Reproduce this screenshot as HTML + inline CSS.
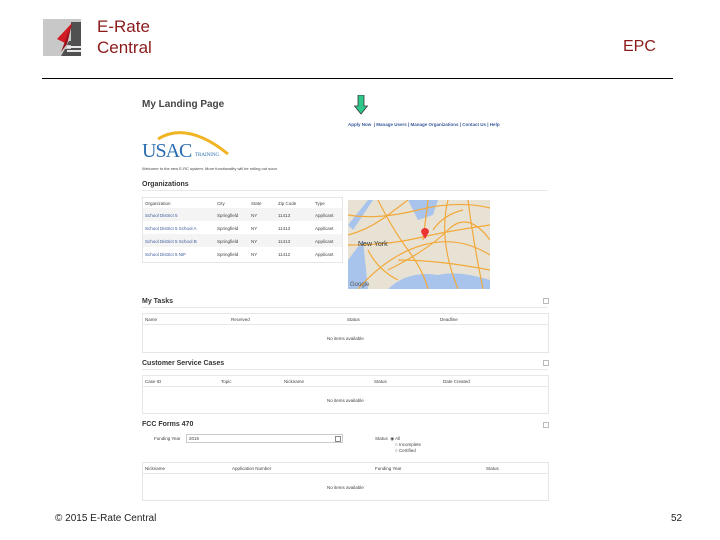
<!DOCTYPE html>
<html><head><meta charset="utf-8"><style>
*{margin:0;padding:0;box-sizing:border-box}
body{width:720px;height:540px;background:#fff;position:relative;overflow:hidden;font-family:"Liberation Sans",sans-serif}
.a{position:absolute;white-space:nowrap}
.t{font-size:4.5px;color:#444}
.h{font-size:7px;font-weight:bold;color:#333}
.box{position:absolute;border:1px solid #e6e6e6}
.ln{position:absolute;height:1px;background:#e8e8e8}
.lk{color:#3a5a9a}
</style></head><body>
<svg class="a" style="left:43px;top:19px" width="38" height="38" viewBox="0 0 38 38">
<rect x="0" y="0" width="38" height="37" fill="#c8c8c8"/>
<polygon points="28,3 38,3 38,37 18,37 22,30 28,30 28,26 24,26 26,22 28,22" fill="#505050"/>
<polygon points="29,4 14,20 24,25" fill="#d01c24"/>
<polygon points="29,4 24,25 18,33" fill="#9a1018"/>
<rect x="24" y="27" width="14" height="2" fill="#e8e8e8"/><rect x="24" y="31" width="14" height="2" fill="#e8e8e8"/>
</svg>
<div class="a" style="left:97px;top:16px;font-size:17px;color:#8b1a1a;line-height:21px">E-Rate<br>Central</div>
<div class="a" style="left:623px;top:38px;font-size:16px;color:#8b1a1a">EPC</div>
<div class="a" style="left:42px;top:78px;width:631px;height:1px;background:#000"></div>

<div class="a" style="left:142px;top:99px;font-size:10px;font-weight:bold;color:#444">My Landing Page</div>
<svg class="a" style="left:354px;top:95px" width="14" height="20" viewBox="0 0 14 20"><polygon points="4,0 10,0 10,11 13.5,11 7,19 0.5,11 4,11" fill="#2ec98a" stroke="#333" stroke-width="0.8"/></svg>
<div class="a t lk" style="left:348px;top:122px;font-weight:bold">Apply Now &nbsp;| Manage Users | Manage Organizations | Contact Us | Help</div>

<svg class="a" style="left:142px;top:126px" width="90" height="36" viewBox="0 0 90 36">
<path d="M16 13 Q45 -5 86 28" fill="none" stroke="#f0b323" stroke-width="3"/>
<text x="0" y="31" font-family="Liberation Serif" font-size="20" fill="#2a6db0" letter-spacing="-1">USAC</text>
<text x="53" y="30" font-family="Liberation Serif" font-size="5" fill="#2a6db0">TRAINING</text>
</svg>
<div class="a t" style="left:142px;top:166px;font-size:4px">Welcome to the new E-RC system. More functionality will be rolling out soon.</div>
<div class="a h" style="left:142px;top:181px">Organizations</div>
<div class="ln" style="left:142px;top:190px;width:406px"></div>

<div class="box" style="left:142px;top:197px;width:201px;height:66px"></div>
<div class="a" style="left:143px;top:208px;width:199px;height:13px;background:#f4f4f4"></div>
<div class="a" style="left:143px;top:234px;width:199px;height:13px;background:#f4f4f4"></div>
<div class="a t" style="left:145px;top:201px">Organization</div><div class="a t" style="left:217px;top:201px">City</div><div class="a t" style="left:251px;top:201px">State</div><div class="a t" style="left:278px;top:201px">Zip Code</div><div class="a t" style="left:315px;top:201px">Type</div>
<div class="a t lk" style="left:145px;top:213px">School District 5</div><div class="a t" style="left:217px;top:213px">Springfield</div><div class="a t" style="left:251px;top:213px">NY</div><div class="a t" style="left:278px;top:213px">11413</div><div class="a t" style="left:315px;top:213px">Applicant</div>
<div class="a t lk" style="left:145px;top:226px">School District 5 School A</div><div class="a t" style="left:217px;top:226px">Springfield</div><div class="a t" style="left:251px;top:226px">NY</div><div class="a t" style="left:278px;top:226px">11413</div><div class="a t" style="left:315px;top:226px">Applicant</div>
<div class="a t lk" style="left:145px;top:239px">School District 5 School B</div><div class="a t" style="left:217px;top:239px">Springfield</div><div class="a t" style="left:251px;top:239px">NY</div><div class="a t" style="left:278px;top:239px">11413</div><div class="a t" style="left:315px;top:239px">Applicant</div>
<div class="a t lk" style="left:145px;top:252px">School District 5 NIF</div><div class="a t" style="left:217px;top:252px">Springfield</div><div class="a t" style="left:251px;top:252px">NY</div><div class="a t" style="left:278px;top:252px">11412</div><div class="a t" style="left:315px;top:252px">Applicant</div>

<svg class="a" style="left:348px;top:200px" width="142" height="89" viewBox="0 0 142 89">
<rect width="142" height="89" fill="#e8e2d4"/>
<path d="M0 60 L15 40 L20 89 L0 89Z" fill="#a8c4ec"/>
<path d="M40 89 Q60 70 90 75 Q110 70 142 80 L142 89Z" fill="#a8c4ec"/>
<path d="M60 0 L90 0 L85 15 L70 20Z" fill="#a8c4ec"/>
<path d="M0 25 L20 0 L25 0 L5 30Z" fill="#a8c4ec"/>
<g fill="none" stroke="#f2a93b" stroke-width="1.2">
<path d="M0 45 Q40 45 70 38 T142 25"/><path d="M10 89 Q40 55 75 45 T142 55"/>
<path d="M30 0 Q45 30 60 50 T80 89"/><path d="M100 0 Q90 40 110 89"/>
<path d="M0 15 Q30 20 70 10 T142 8"/><path d="M50 60 Q90 60 142 70"/><path d="M75 40 L80 0"/>
<path d="M0 35 Q20 30 40 15 T60 0"/><path d="M120 0 Q125 40 135 89"/><path d="M40 70 Q80 50 100 30 T142 40"/>
<path d="M20 50 Q30 70 50 80"/><path d="M85 30 Q95 15 115 10"/>
</g>
<path d="M73 32 a4 4 0 1 1 8 0 l-4 7z" fill="#e33"/>
<text x="10" y="46" font-size="7" fill="#333" font-family="Liberation Sans">New York</text>
<text x="2" y="86" font-size="6" fill="#555" font-family="Liberation Sans">Google</text>
</svg>

<div class="a h" style="left:142px;top:298px">My Tasks</div>
<div class="a" style="left:543px;top:298px;width:6px;height:6px;border:1px solid #bbb"></div>
<div class="ln" style="left:142px;top:307px;width:406px"></div>
<div class="box" style="left:142px;top:313px;width:407px;height:40px"></div>
<div class="ln" style="left:142px;top:324px;width:407px"></div>
<div class="a t" style="left:145px;top:317px">Name</div><div class="a t" style="left:231px;top:317px">Received</div><div class="a t" style="left:347px;top:317px">Status</div><div class="a t" style="left:440px;top:317px">Deadline</div>
<div class="a t" style="left:327px;top:336px">No items available</div>

<div class="a h" style="left:142px;top:360px">Customer Service Cases</div>
<div class="a" style="left:543px;top:360px;width:6px;height:6px;border:1px solid #bbb"></div>
<div class="ln" style="left:142px;top:369px;width:406px"></div>
<div class="box" style="left:142px;top:375px;width:407px;height:39px"></div>
<div class="ln" style="left:142px;top:386px;width:407px"></div>
<div class="a t" style="left:145px;top:379px">Case ID</div><div class="a t" style="left:221px;top:379px">Topic</div><div class="a t" style="left:284px;top:379px">Nickname</div><div class="a t" style="left:374px;top:379px">Status</div><div class="a t" style="left:443px;top:379px">Date Created</div>
<div class="a t" style="left:327px;top:398px">No items available</div>

<div class="a h" style="left:142px;top:421px">FCC Forms 470</div>
<div class="a" style="left:543px;top:422px;width:6px;height:6px;border:1px solid #bbb"></div>
<div class="a t" style="left:154px;top:436px">Funding Year</div>
<div class="a" style="left:186px;top:434px;width:157px;height:9px;border:1px solid #ccc"></div>
<div class="a t" style="left:189px;top:436px">2016</div>
<div class="a" style="left:335px;top:436px;width:6px;height:6px;border:1px solid #888"></div>
<div class="a t" style="left:375px;top:436px">Status &nbsp;◉ All</div>
<div class="a t" style="left:395px;top:442px">○ Incomplete</div>
<div class="a t" style="left:395px;top:448px">○ Certified</div>
<div class="box" style="left:142px;top:462px;width:407px;height:39px"></div>
<div class="ln" style="left:142px;top:473px;width:407px"></div>
<div class="a t" style="left:145px;top:466px">Nickname</div><div class="a t" style="left:232px;top:466px">Application Number</div><div class="a t" style="left:375px;top:466px">Funding Year</div><div class="a t" style="left:486px;top:466px">Status</div>
<div class="a t" style="left:327px;top:485px">No items available</div>

<div class="a" style="left:55px;top:513px;font-size:10px;color:#222">© 2015 E-Rate Central</div>
<div class="a" style="left:671px;top:513px;font-size:10px;color:#222">52</div>
</body></html>
